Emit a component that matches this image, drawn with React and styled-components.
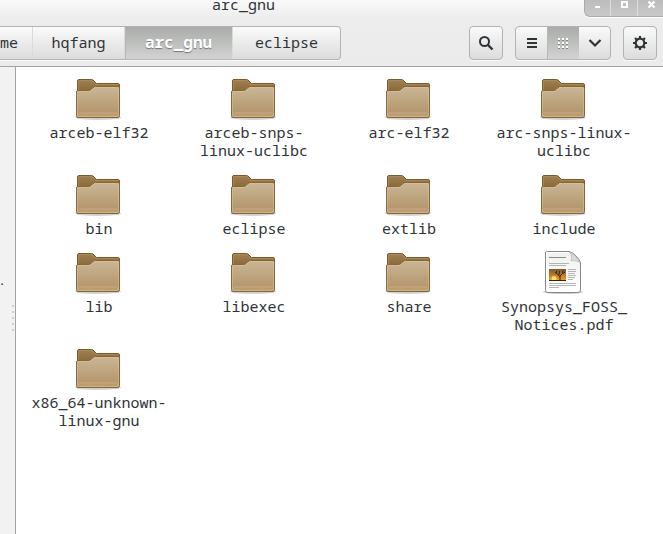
import React from "react";
import styled, { createGlobalStyle, css } from "styled-components";

const GlobalStyle = createGlobalStyle`
  * { box-sizing: border-box; }
  body {
    margin: 0;
    overflow: hidden;
    background: #ffffff;
    color: #2e3436;
    font: 15px/18px "Noto Sans Mono", "DejaVu Sans Mono", monospace;
  }
  button { font: inherit; color: inherit; }
`;

const Window = styled.div`
  display: flex;
  flex-direction: column;
  height: 100vh;
`;

const Header = styled.header`
  flex: none;
  background: linear-gradient(#fafafa, #ededed 18px, #ebebeb);
  border-bottom: 1px solid #a2a4a2;
`;

const TitleBar = styled.div`
  display: flex;
  height: 18px;
`;

const Title = styled.h1`
  flex: 1;
  margin: 0;
  padding-right: 97px;
  font-size: 15px;
  font-weight: normal;
  line-height: 8px;
  text-align: center;
`;

const WindowControls = styled.div`
  display: flex;
  width: 79px;
  height: 17px;
  overflow: hidden;
  border: 1px solid #a9aba9;
  border-width: 0 0 1px 1px;
  border-radius: 0 0 0 6px;
  box-shadow: 0 1px #ffffff;
  background: linear-gradient(#bcbcbc, #c9c9c9);
`;

const ControlButton = styled.button`
  flex: none;
  display: grid;
  place-items: start center;
  width: 27px;
  height: 16px;
  padding: 0;
  border: 0;
  background: none;
  &:first-child { width: 25px; }
  & + & { border-left: 1px solid #dedede; }
`;

const Toolbar = styled.div`
  display: flex;
  align-items: center;
  gap: 12px;
  height: 48px;
  padding: 2px 6px 0 0;
`;

const ButtonGroup = styled.div`
  display: flex;
  height: 34px;
  overflow: hidden;
  border: 1px solid #b2b3b2;
  border-radius: 4px;
  box-shadow: 0 1px #fafafa;
  background: linear-gradient(#fafafa, #dcdcdc);
`;

const PathBar = styled.nav`
  display: flex;
  height: 34px;
  margin-right: auto;
  overflow: hidden;
  border: 1px solid #b2b3b2;
  border-left: 0;
  border-radius: 0 4px 4px 0;
  box-shadow: 0 1px #fafafa;
  background: linear-gradient(#fafafa, #dcdcdc);
`;

const pressed = css`
  color: #ffffff;
  background: linear-gradient(#a9aca9, #d2d3d2);
  box-shadow: inset 1px 0 #b6b8b6;
`;

const PathButton = styled.button`
  width: ${(p) => p.$width}px;
  padding: 0 0 2px;
  border: 0;
  border-right: 1px solid #dadada;
  background: none;
  text-align: center;
  &:last-child { border-right: 0; }
  ${(p) => p.$clipped && css`
    padding-right: 18px;
    text-align: right;
  `}
  ${(p) => p.$active && css`
    ${pressed}
    font-size: 16px;
    font-weight: bold;
    text-shadow: 0 1px 1px #747874;
  `}
`;

const ToolButton = styled.button`
  display: grid;
  place-items: center;
  width: 32px;
  height: 32px;
  padding: 0;
  border: 0;
  background: none;
  ${(p) => p.$active && pressed}
`;

const ViewGroup = styled(ButtonGroup)`
  ${ToolButton}:first-child { width: 31px; }
  ${ToolButton}:last-child { width: 31px; }
`;

const Body = styled.div`
  display: flex;
  flex: 1;
  min-height: 0;
`;

const Sidebar = styled.aside`
  display: flex;
  flex: none;
  flex-direction: column;
  align-items: flex-end;
  width: 16px;
  padding-top: 204px;
  border-right: 1px solid #a2a4a2;
  background: #f2f2f2;
`;

const SidebarText = styled.span`
  align-self: flex-start;
  font-family: "Liberation Sans", sans-serif;
`;

const Grip = styled.div`
  display: grid;
  gap: 4px;
  margin: 16px 1px 0 0;
`;

const GripDot = styled.i`
  width: 2px;
  height: 2px;
  background: #cfcfcf;
`;

const FileGrid = styled.main`
  flex: 1;
  display: grid;
  grid-template-columns: repeat(auto-fill, 154px);
  align-content: start;
  gap: 12px 1px;
  padding: 8px 0 0 5px;
`;

const FileItem = styled.figure`
  display: flex;
  flex-direction: column;
  align-items: center;
  margin: 0;
  padding: 0 8px;
`;

const FileName = styled.figcaption`
  padding-left: 2px;
  text-align: center;
`;

function FolderIcon() {
  return (
    <svg width="48" height="48" viewBox="0 0 48 48" aria-hidden="true">
      <ellipse cx="24" cy="42.500" rx="23" ry="2.500" fill="#000" opacity=".18" />
      <path d="M3.500 40V6Q3.500 4.500 5 4.500H17.500Q19 4.500 20 6L22.500 8.500H44Q45.500 8.500 45.500 10V40Z" fill="url(#folderBack)" stroke="#7c5a2b" />
      <path d="M4.500 15V6.500Q4.500 5.500 6 5.500H17.500L22 9.500H44.500" fill="none" stroke="#b3925f" opacity=".6" />
      <path d="M2.500 40.500V17Q2.500 15.500 4 15.500H14.500Q16 15.500 17 14.500L19 12.500Q20 11.500 21.500 11.500H44Q45.500 11.500 45.500 13V40.500Q45.500 42.500 44 42.500H4Q2.500 42.500 2.500 40.500Z" fill="url(#folderFront)" stroke="#8b6635" />
      <path d="M3.500 40V17.500Q3.500 16.500 4.500 16.500H15Q16.500 16.500 17.500 15.500L20 13Q20.500 12.500 22 12.500H43.500Q44.500 12.500 44.500 13.500V40Q44.500 41.500 43 41.500H5Q3.500 41.500 3.500 40Z" fill="none" stroke="#dac7a4" opacity=".5" />
      <path d="M5 38H43" stroke="#c9b088" strokeWidth="2" opacity=".4" />
    </svg>
  );
}

function DocumentIcon() {
  return (
    <svg width="48" height="48" viewBox="0 0 48 48" aria-hidden="true">
      <ellipse cx="24" cy="43" rx="20" ry="2" fill="#000" opacity=".2" />
      <path d="M8 2.500H30C35 4 40 9 41.500 14V41Q41.500 43.500 39 43.500H8.500Q6.500 43.500 6.500 41.500V4Q6.500 2.500 8 2.500Z" fill="url(#paper)" stroke="#888a85" />
      <path d="M7.500 41V3.500H30" fill="none" stroke="#fff" />
      <path d="M30 3C33 5 33 8 32 12C36 11 39 12 41 14C39 9 35 5 30 3Z" fill="#dadbd8" stroke="#b4b6b0" strokeWidth=".7" />
      <path d="M10 14.500H30M10 16.500H27M29 20.500H37M29 22.500H37M29 24.500H36M29 26.500H37M29 28.500H36M29 30.500H34M10 34.500H37M10 36.500H37M10 38.500H20" stroke="#b4b6b3" />
      <path d="M10 8.500H27" stroke="#8b8d89" />
      <rect x="10" y="20" width="17" height="12" fill="url(#sunset)" />
      <circle cx="15" cy="29.500" r="2.500" fill="#ffe06a" />
      <path d="M10 31.500H27" stroke="#332411" />
      <path d="M21 32V26.500M21 28L17.500 24V22M18 24.500L16 23.500M21 27L23.500 24.500L24 21.500M23.500 24.500L26 23M20 26L20.500 22" fill="none" stroke="#33230f" strokeWidth="1" />
    </svg>
  );
}

function IconPaints() {
  return (
    <defs>
      <linearGradient id="folderBack" x1="0" y1="0" x2="0" y2="1">
        <stop offset="0" stopColor="#a18152" />
        <stop offset=".3" stopColor="#8b6a3c" />
      </linearGradient>
      <linearGradient id="folderFront" x1="0" y1="0" x2="0" y2="1">
        <stop offset="0" stopColor="#cab796" />
        <stop offset=".8" stopColor="#b5986e" />
        <stop offset="1" stopColor="#bda177" />
      </linearGradient>
      <linearGradient id="paper" x1="0" y1="0" x2="0" y2="1">
        <stop offset="0" stopColor="#f1f1f0" />
        <stop offset="1" stopColor="#ffffff" />
      </linearGradient>
      <linearGradient id="sunset" x1="0" y1="0" x2="0" y2="1">
        <stop offset="0" stopColor="#735b38" />
        <stop offset=".5" stopColor="#c07b26" />
        <stop offset="1" stopColor="#f5a51e" />
      </linearGradient>
    </defs>
  );
}

const Paints = styled.svg`
  position: absolute;
  width: 0;
  height: 0;
`;

const Glyph = ({ children }) => (
  <svg width="16" height="16" viewBox="0 0 16 16" fill="none" stroke="#2e3436" strokeWidth="2" aria-hidden="true">
    {children}
  </svg>
);

const teeth = [0, 45, 90, 135, 180, 225, 270, 315];
const dots = [3, 7, 11];

const path = [
  { name: "me", width: 33, clipped: true },
  { name: "hqfang", width: 92 },
  { name: "arc_gnu", width: 108, active: true },
  { name: "eclipse", width: 107 },
];

const files = [
  "arceb-elf32", "arceb-snps-linux-uclibc", "arc-elf32", "arc-snps-linux-uclibc",
  "bin", "eclipse", "extlib", "include",
  "lib", "libexec", "share", "Synopsys_FOSS_Notices.pdf",
  "x86_64-unknown-linux-gnu",
];

const breakable = (name) =>
  name.split("FOSS_").map((part, i) => (
    <React.Fragment key={i}>{i > 0 && <>FOSS_<wbr /></>}{part}</React.Fragment>
  ));

export default function App() {
  return (
    <Window>
      <GlobalStyle />
      <Paints aria-hidden="true"><IconPaints /></Paints>
      <Header>
        <TitleBar>
          <Title>arc_gnu</Title>
          <WindowControls>
            <ControlButton aria-label="Minimize">
              <svg width="9" height="10"><path d="M2 7H7" stroke="#fff" strokeWidth="2" /></svg>
            </ControlButton>
            <ControlButton aria-label="Maximize">
              <svg width="9" height="10"><path d="M2 2H7V7H2Z" fill="none" stroke="#fff" strokeWidth="2" /></svg>
            </ControlButton>
            <ControlButton aria-label="Close">
              <svg width="9" height="10"><path d="M1.500 1.500L7.500 7.500M7.500 1.500L1.500 7.500" stroke="#fff" strokeWidth="2.200" /></svg>
            </ControlButton>
          </WindowControls>
        </TitleBar>
        <Toolbar>
          <PathBar aria-label="Location">
            {path.map((p) => (
              <PathButton key={p.name} $width={p.width} $clipped={p.clipped} $active={p.active}>{p.name}</PathButton>
            ))}
          </PathBar>
          <ButtonGroup>
            <ToolButton aria-label="Search">
              <Glyph><circle cx="6.500" cy="6.500" r="4.500" /><path d="M9.500 9.500L14.500 14.500" strokeWidth="2.400" /></Glyph>
            </ToolButton>
          </ButtonGroup>
          <ViewGroup>
            <ToolButton aria-label="List view">
              <Glyph><path d="M3 4H13M3 8H13M3 12H13" /></Glyph>
            </ToolButton>
            <ToolButton aria-label="Icon view" $active>
              <Glyph>
                {dots.map((y) => dots.map((x) => (
                  <React.Fragment key={`${x}-${y}`}>
                    <rect x={x} y={y + 1} width="2" height="2" fill="#858885" stroke="none" />
                    <rect x={x} y={y} width="2" height="2" fill="#fff" stroke="none" />
                  </React.Fragment>
                )))}
              </Glyph>
            </ToolButton>
            <ToolButton aria-label="View options">
              <Glyph><path d="M2.500 5L8 10.500L13.500 5" strokeWidth="2.200" /></Glyph>
            </ToolButton>
          </ViewGroup>
          <ButtonGroup>
            <ToolButton aria-label="Settings">
              <Glyph>
                <circle cx="8" cy="8" r="4.300" strokeWidth="2.200" />
                {teeth.map((a) => <path key={a} d="M8 1V4" strokeWidth="2.200" transform={`rotate(${a} 8 8)`} />)}
              </Glyph>
            </ToolButton>
          </ButtonGroup>
        </Toolbar>
      </Header>
      <Body>
        <Sidebar>
          <SidebarText>.</SidebarText>
          <Grip>
            {[0, 1, 2, 3, 4].map((i) => <GripDot key={i} />)}
          </Grip>
        </Sidebar>
        <FileGrid>
          {files.map((name) => (
            <FileItem key={name}>
              {name.endsWith(".pdf") ? <DocumentIcon /> : <FolderIcon />}
              <FileName>{breakable(name)}</FileName>
            </FileItem>
          ))}
        </FileGrid>
      </Body>
    </Window>
  );
}
